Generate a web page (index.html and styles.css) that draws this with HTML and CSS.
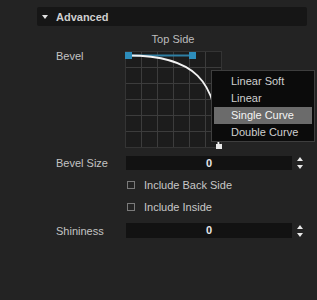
FILE: index.html
```html
<!DOCTYPE html>
<html>

<head>
    <title>Advanced</title>
    <link rel="stylesheet" href="styles.css">
</head>

<body>
    <div class="panel">
        <!-- Section header -->
        <div class="section-header">
            <span class="arrow"></span>
            <span class="section-title">Advanced</span>
        </div>

        <div class="row title-row">
            <div class="label"></div>
            <div class="graph-title">Top Side</div>
        </div>

        <!-- Bevel curve -->
        <div class="row graph-row">
            <div class="label">Bevel</div>
            <div class="graph">
                <svg width="100" height="99" viewBox="0 0 100 99">
                    <rect x="0.5" y="0.5" width="96" height="96" fill="#1c1c1c" stroke="#343434" />
                    <g stroke="#3c3c3c" stroke-width="1">
                        <line x1="16.5" y1="1" x2="16.5" y2="96" />
                        <line x1="32.5" y1="1" x2="32.5" y2="96" />
                        <line x1="48.5" y1="1" x2="48.5" y2="96" />
                        <line x1="64.5" y1="1" x2="64.5" y2="96" />
                        <line x1="80.5" y1="1" x2="80.5" y2="96" />
                        <line x1="1" y1="16.5" x2="96" y2="16.5" />
                        <line x1="1" y1="32.5" x2="96" y2="32.5" />
                        <line x1="1" y1="48.5" x2="96" y2="48.5" />
                        <line x1="1" y1="64.5" x2="96" y2="64.5" />
                        <line x1="1" y1="80.5" x2="96" y2="80.5" />
                    </g>
                    <line x1="3.5" y1="4.5" x2="67.5" y2="4.5" stroke="#2f7fa3" stroke-width="2" />
                    <path d="M3.5 4.5 C 67.5 4.5, 93.5 28, 93.5 95" fill="none" stroke="#f2f2f2" stroke-width="1.8" />
                    <rect x="0" y="1" width="7" height="7" fill="#2d8dbb" />
                    <rect x="64" y="1" width="7" height="7" fill="#2d8dbb" />
                    <rect x="91" y="93" width="6" height="5" fill="#e8e8e8" />
                </svg>

                <!-- Curve type menu -->
                <div class="menu">
                    <div class="menu-item">Linear Soft</div>
                    <div class="menu-item">Linear</div>
                    <div class="menu-item selected">Single Curve</div>
                    <div class="menu-item">Double Curve</div>
                </div>
            </div>
        </div>

        <div class="row field-row">
            <div class="label">Bevel Size</div>
            <div class="number-input">0</div>
            <div class="spinner"><span class="up"></span><span class="down"></span></div>
        </div>

        <div class="row check-row">
            <div class="label"></div>
            <span class="checkbox"></span>
            <span class="check-text">Include Back Side</span>
        </div>

        <div class="row check-row">
            <div class="label"></div>
            <span class="checkbox"></span>
            <span class="check-text">Include Inside</span>
        </div>

        <div class="row field-row shininess">
            <div class="label">Shininess</div>
            <div class="number-input">0</div>
            <div class="spinner"><span class="up"></span><span class="down"></span></div>
        </div>
    </div>
</body>

</html>
```

FILE: styles.css
```css
body {
    margin: 0;
    background-color: #232323;
    font-family: "Liberation Sans", Arial, sans-serif;
    font-size: 11px;
    color: #c4c4c4;
    height: 300px;
}

.panel {
    padding: 7px 10px 0 37px;
}

/* Section header */
.section-header {
    display: flex;
    align-items: center;
    height: 19px;
    background-color: #161616;
    border-radius: 2px;
}

.arrow {
    width: 0;
    height: 0;
    margin-left: 5px;
    border-left: 3px solid transparent;
    border-right: 3px solid transparent;
    border-top: 4px solid #e0e0e0;
}

.section-title {
    margin-left: 8px;
    font-weight: bold;
    color: #cfcfcf;
}

/* Rows */
.row {
    display: flex;
    align-items: center;
}

.label {
    width: 69px;
    margin-left: 19px;
    flex-shrink: 0;
    line-height: 14px;
    color: #c4c4c4;
}

.title-row {
    margin-top: 6px;
    height: 14px;
}

.graph-title {
    width: 96px;
    text-align: center;
    line-height: 14px;
    color: #bdbdbd;
}

.graph-row {
    margin-top: 3px;
    align-items: flex-start;
}

.graph {
    position: relative;
    margin-top: 2px;
}

.graph svg {
    display: block;
}

/* Dropdown menu */
.menu {
    position: absolute;
    left: 86px;
    top: 19px;
    width: 98px;
    padding: 2px 2px 0 2px;
    background-color: #0b0b0b;
    border: 1px solid #3e3e3e;
}

.menu-item {
    height: 17px;
    line-height: 17px;
    padding-left: 17px;
    color: #cfcfcf;
}

.menu-item.selected {
    background-color: #6b6b6b;
    color: #f4f4f4;
}

/* Number fields */
.field-row {
    margin-top: 6px;
}

.shininess {
    margin-top: 9px;
}

.number-input {
    width: 166px;
    height: 14px;
    margin-left: 1px;
    line-height: 14px;
    background-color: #121212;
    text-align: center;
    font-weight: bold;
    color: #e6e6e6;
}

.shininess .number-input {
    height: 15px;
    line-height: 15px;
}

.spinner {
    display: flex;
    flex-direction: column;
    gap: 4px;
    margin-left: 5px;
}

.spinner .up,
.spinner .down {
    width: 0;
    height: 0;
    border-left: 3.5px solid transparent;
    border-right: 3.5px solid transparent;
}

.spinner .up {
    border-bottom: 4px solid #e8e8e8;
}

.spinner .down {
    border-top: 4px solid #e8e8e8;
}

/* Checkboxes */
.check-row {
    margin-top: 8px;
    height: 14px;
}

.checkbox {
    width: 6px;
    height: 6px;
    margin-left: 2px;
    border: 1px solid #7a7a7a;
}

.check-text {
    margin-left: 9px;
    line-height: 14px;
    color: #c8c8c8;
}
```
